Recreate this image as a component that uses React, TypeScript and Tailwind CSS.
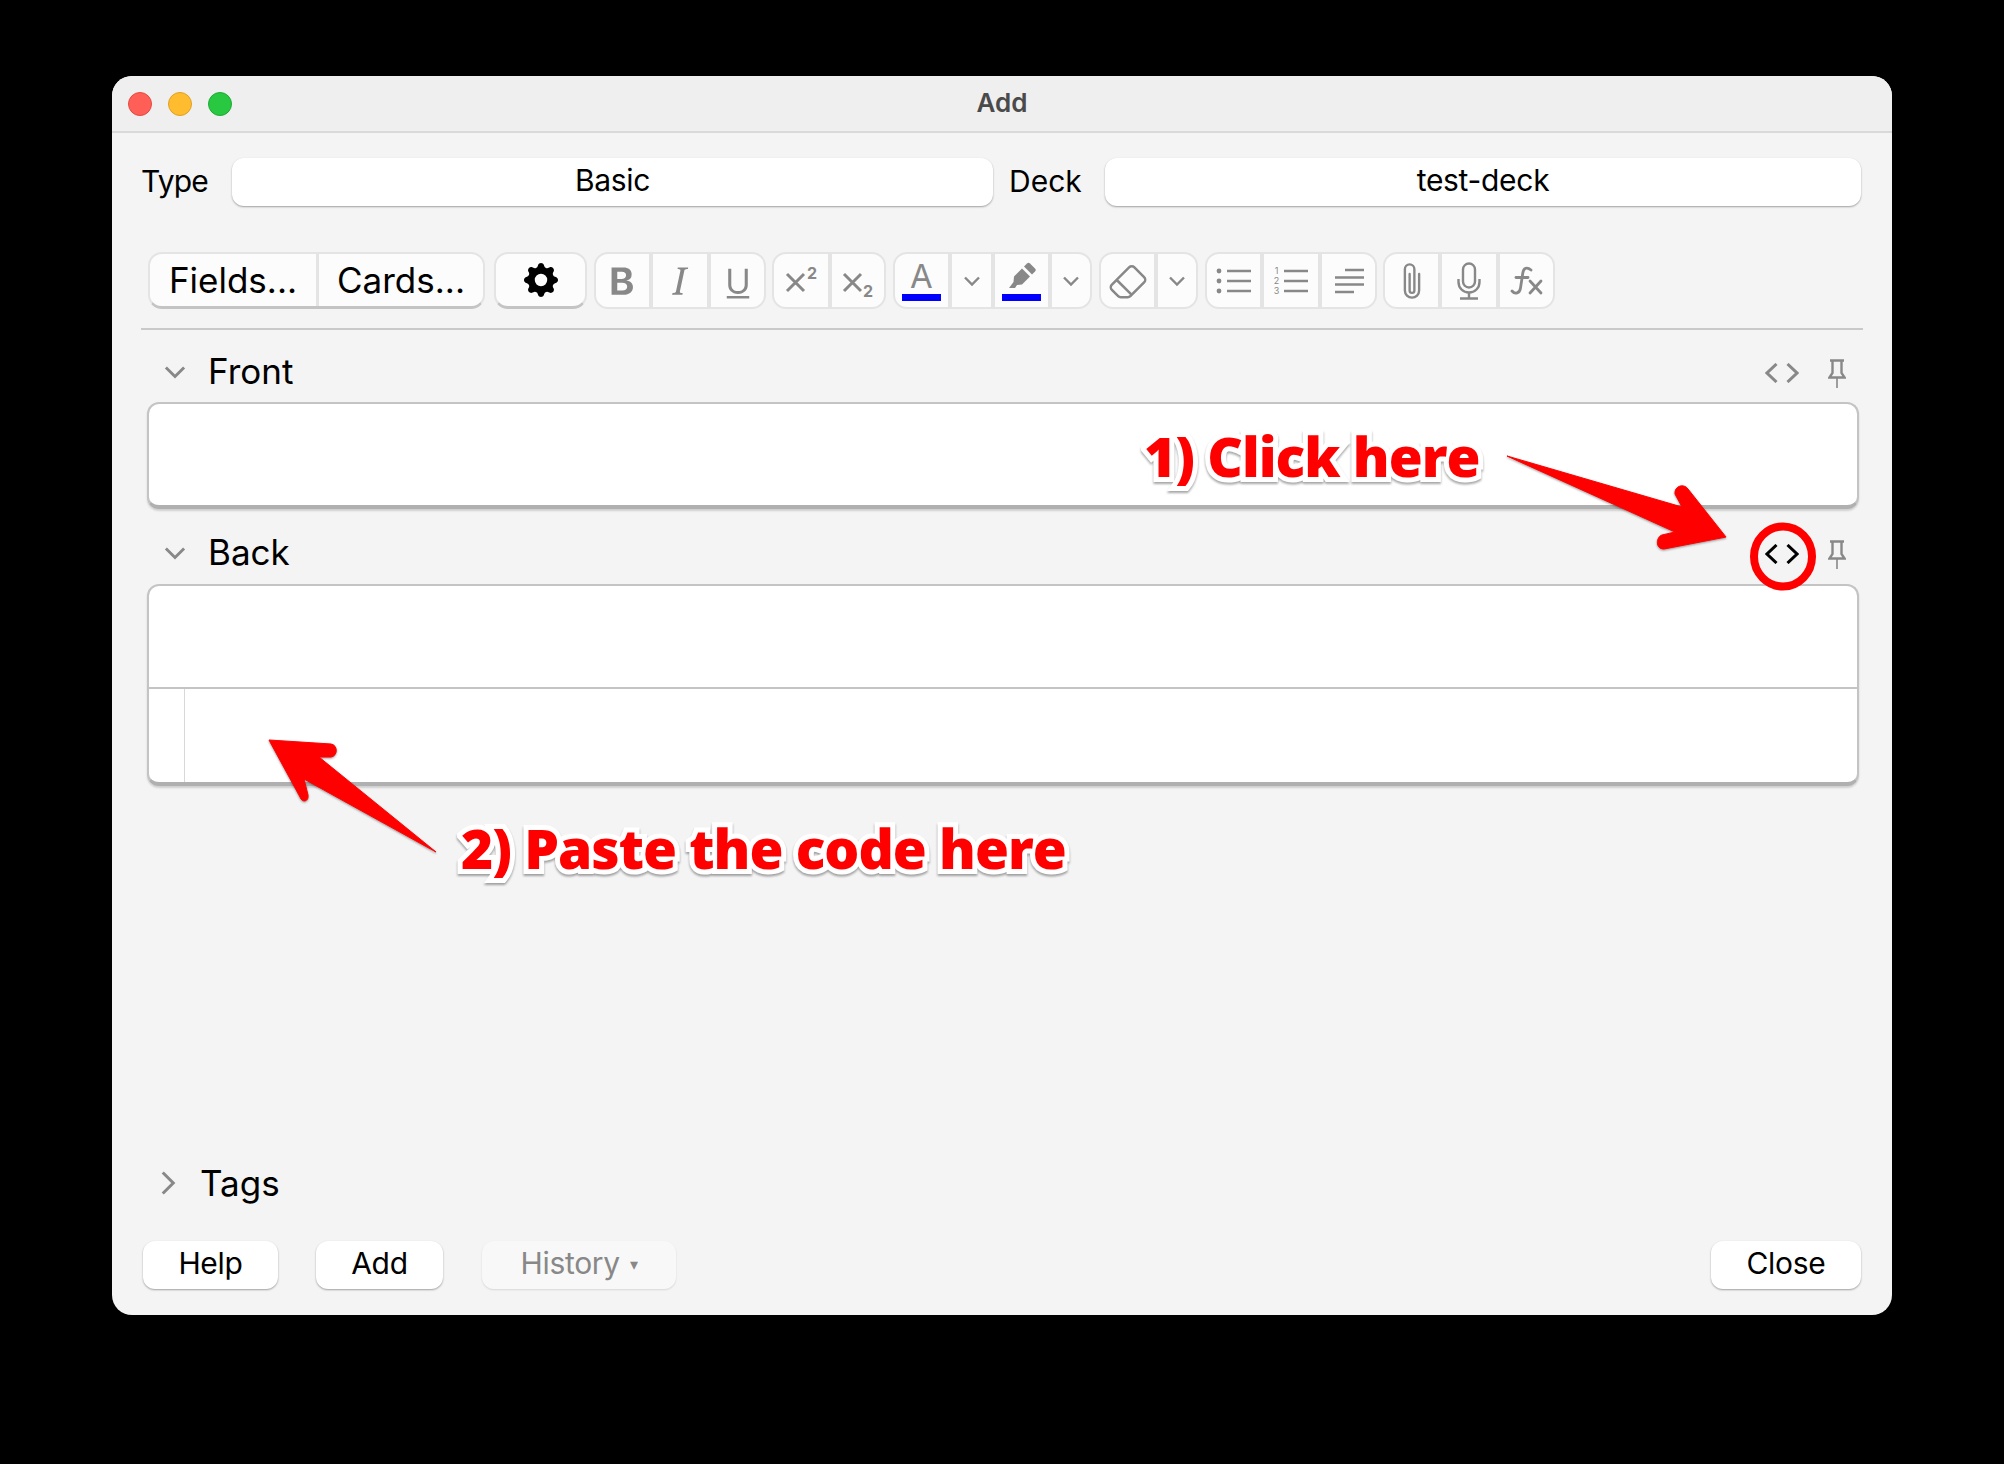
import type { ReactNode } from 'react';
import { BsEraser, BsGearFill, BsPaperclip, BsTypeBold, BsTypeItalic, BsTypeUnderline } from 'react-icons/bs';

const ICON = 'text-[#888888]';

function Chevron({
  down = true,
  size = 20,
  weight = 2.6,
  className = '',
}: {
  down?: boolean;
  size?: number;
  weight?: number;
  className?: string;
}) {
  return (
    <svg width={size} height={size} viewBox="0 0 20 20" fill="none" className={className}>
      <path
        d={down ? 'M3 6.5 L10 13.5 L17 6.5' : 'M6.5 3 L13.5 10 L6.5 17'}
        stroke="#888888"
        strokeWidth={weight}
      />
    </svg>
  );
}

function Group({ className = '', children }: { className?: string; children: ReactNode }) {
  return (
    <div className={`flex h-[57px] gap-[4px] overflow-hidden rounded-[14px] border-2 border-[#e4e4e4] bg-[#e4e4e4] ${className}`}>
      {children}
    </div>
  );
}

function Cell({ w, children }: { w: string; children: ReactNode }) {
  return <div className={`flex items-center justify-center bg-[#fcfcfc] ${w} ${ICON}`}>{children}</div>;
}

function ColorBar({ children }: { children: ReactNode }) {
  return (
    <div className="flex h-full w-full flex-col items-center pt-[4px]">
      <div className="flex h-[36px] items-center justify-center">{children}</div>
      <div className="h-[7px] w-[39px] bg-[#0000ff]" />
    </div>
  );
}

function Script({ sub = false }: { sub?: boolean }) {
  return (
    <svg width="36" height="46" viewBox="0 0 36 46" fill="none">
      <path d="M4 16 L21 33 M21 16 L4 33" stroke="#888888" strokeWidth="3" />
      <text
        x={sub ? 23 : 24}
        y={sub ? 39 : 21}
        fontSize="16"
        fontWeight="700"
        fill="#888888"
        fontFamily="Inter, sans-serif"
      >
        2
      </text>
    </svg>
  );
}

function Highlighter() {
  return (
    <svg width="30" height="30" viewBox="0 0 30 30" fill="#888888">
      <path d="M20 2.5 C21 1.5 22 1.5 23 2.5 L28 7.5 C29 8.5 29 9.5 28 10.5 L25 13.5 L17 5.5 Z" />
      <path d="M15 7.5 L23 15.5 L15 23.5 L10 24 L8 27 L2 27 L6.5 21 L7 15.5 Z" />
    </svg>
  );
}

function BulletList() {
  return (
    <svg width="36" height="30" viewBox="0 0 36 30" fill="none" stroke="#888888" strokeWidth="2.6">
      <circle cx="3" cy="5" r="2.4" fill="#888888" stroke="none" />
      <circle cx="3" cy="15" r="2.4" fill="#888888" stroke="none" />
      <circle cx="3" cy="25" r="2.4" fill="#888888" stroke="none" />
      <path d="M11 5 H35 M11 15 H35 M11 25 H35" />
    </svg>
  );
}

function NumberList() {
  return (
    <svg width="36" height="34" viewBox="0 0 36 34" fill="none">
      <g fontSize="9" fill="#888888" fontFamily="Inter, sans-serif" textAnchor="middle">
        <text x="3.5" y="10">1</text>
        <text x="3.5" y="20">2</text>
        <text x="3.5" y="30">3</text>
      </g>
      <path d="M11 7 H35 M11 17 H35 M11 27 H35" stroke="#888888" strokeWidth="2.6" />
    </svg>
  );
}

function TextLines() {
  return (
    <svg width="30" height="28" viewBox="0 0 30 28" fill="none" stroke="#888888" strokeWidth="2.6">
      <path d="M11 3 H30 M1 10.5 H30 M1 17.5 H30 M1 25 H20" />
    </svg>
  );
}

function Mic() {
  return (
    <svg width="24" height="38" viewBox="0 0 24 38" fill="none" stroke="#888888" strokeWidth="2.4">
      <rect x="6" y="1.5" width="12" height="24" rx="6" />
      <path d="M1.5 17 V20 C1.5 26 6 30.5 12 30.5 C18 30.5 22.5 26 22.5 20 V17" />
      <path d="M12 30.5 V36 M3 36.5 H21" />
    </svg>
  );
}

function FxIcon() {
  return (
    <svg width="33" height="30" viewBox="0 0 33 30" fill="none" stroke="#888888" strokeWidth="2.8" strokeLinecap="round">
      <path d="M21 4 C17 0.5 13.5 2 12.8 7 L10.5 22 C9.8 27.5 5 28.5 2 25" />
      <path d="M6 11.5 L18 11.5" />
      <path d="M20 15 L31 27 M31 15 L20 27" />
    </svg>
  );
}

function CodeIcon({ dark = false }: { dark?: boolean }) {
  return (
    <svg width="34" height="20" viewBox="0 0 34 20" fill="none" stroke={dark ? '#000000' : '#888888'} strokeWidth="3">
      <path d="M11.5 1 L2 10 L11.5 19 M22.5 1 L32 10 L22.5 19" />
    </svg>
  );
}

function PinIcon() {
  return (
    <svg width="18" height="29" viewBox="0 0 18 29" fill="none" stroke="#888888" strokeWidth="2.4">
      <path d="M2 1.5 H16 M4.5 2 V14 L1.5 18.5 H16.5 L13.5 14 V2" />
      <path d="M9 18.5 V29" strokeWidth="1.6" />
    </svg>
  );
}

function WideButton({ w, children, muted = false }: { w: string; children: ReactNode; muted?: boolean }) {
  return (
    <div
      className={`flex h-[48px] items-center justify-center rounded-[12px] pb-[3px] text-[30px] tracking-[-0.3px] ${w} ${
        muted
          ? 'bg-[#f8f8f8] text-[#888888] shadow-[0_1px_2px_rgba(0,0,0,0.12)]'
          : 'bg-white text-black shadow-[0_1px_2px_rgba(0,0,0,0.35)]'
      }`}
    >
      {children}
    </div>
  );
}

function FieldHeader({ label, active = false, topClass }: { label: string; active?: boolean; topClass: string }) {
  return (
    <div className={`flex h-[38px] items-center ${topClass}`}>
      <Chevron size={26} weight={2.2} className="ml-[21px] mt-[2px]" />
      <span className="ml-[20px] text-[35px] leading-none text-black">{label}</span>
      <div className="ml-auto flex translate-y-[2px] items-center">
        <CodeIcon dark={active} />
        <div className="ml-[29px] mr-[17px]"><PinIcon /></div>
      </div>
    </div>
  );
}

export default function App() {
  return (
    <div className="relative min-h-[1464px] overflow-hidden bg-black pl-[112px] pt-[76px] font-['Inter','Liberation_Sans',sans-serif]">
      <div className="flex h-[1239px] w-[1780px] flex-col overflow-hidden rounded-[20px] bg-[#f4f4f4]">
        {/* title bar */}
        <div className="relative flex h-[57px] shrink-0 items-center justify-center border-b-2 border-[#d9d9d9] bg-[#efefef]">
          <div className="absolute left-[16px] top-[16px] flex gap-[16px]">
            <div className="h-[24px] w-[24px] rounded-full border border-[#e5493f] bg-[#ff5f57]" />
            <div className="h-[24px] w-[24px] rounded-full border border-[#dfa123] bg-[#febc2e]" />
            <div className="h-[24px] w-[24px] rounded-full border border-[#1eaa35] bg-[#28c840]" />
          </div>
          <span className="mb-[2px] text-[26px] font-semibold text-[#4a4a4a]">Add</span>
        </div>

        <div className="flex flex-1 flex-col px-[29px] pb-[26px]">
          {/* type and deck */}
          <div className="mt-[25px] flex items-center">
            <span className="mb-[2px] w-[91px] text-[30px] tracking-[-0.8px] text-black">Type</span>
            <WideButton w="w-[761px]">Basic</WideButton>
            <span className="mb-[2px] ml-[16px] w-[96px] text-[30px] text-black">Deck</span>
            <div className="mr-[2px] flex-1">
              <WideButton w="w-full">test-deck</WideButton>
            </div>
          </div>

          {/* editor toolbar */}
          <div className="ml-[7px] mt-[46px] flex">
            <div className="flex h-[57px] gap-[3px] overflow-hidden rounded-[14px] border-2 border-b-[3px] border-[#e4e4e4] border-b-[#c4c4c4] bg-[#e4e4e4] text-[35px] text-black">
              <div className="flex w-[166px] items-center justify-center bg-[#fcfcfc]">Fields...</div>
              <div className="flex w-[164px] items-center justify-center bg-[#fcfcfc]">Cards...</div>
            </div>
            <div className="ml-[9px] mr-[7px] flex h-[57px] w-[93px] items-center justify-center rounded-[14px] border-2 border-b-[3px] border-[#e4e4e4] border-b-[#c4c4c4] bg-[#fcfcfc]">
              <BsGearFill size={34} className="text-black" />
            </div>
            <Group>
              <Cell w="w-[53px]"><BsTypeBold size={44} /></Cell>
              <Cell w="w-[54px]"><BsTypeItalic size={44} /></Cell>
              <Cell w="w-[53px]"><BsTypeUnderline size={40} /></Cell>
            </Group>
            <Group className="ml-[6px]">
              <Cell w="w-[54px]"><Script /></Cell>
              <Cell w="w-[52px]"><Script sub /></Cell>
            </Group>
            <Group className="ml-[7px]">
              <Cell w="w-[53px]"><ColorBar><span className="text-[33px] leading-none text-[#888888]">A</span></ColorBar></Cell>
              <Cell w="w-[39px]"><Chevron size={20} weight={2.4} /></Cell>
              <Cell w="w-[53px]"><ColorBar><Highlighter /></ColorBar></Cell>
              <Cell w="w-[38px]"><Chevron size={20} weight={2.4} /></Cell>
            </Group>
            <Group className="ml-[7px]">
              <Cell w="w-[53px]"><BsEraser size={40} /></Cell>
              <Cell w="w-[38px]"><Chevron size={20} weight={2.4} /></Cell>
            </Group>
            <Group className="ml-[7px]">
              <Cell w="w-[53px]"><BulletList /></Cell>
              <Cell w="w-[54px]"><NumberList /></Cell>
              <Cell w="w-[53px]"><TextLines /></Cell>
            </Group>
            <Group className="ml-[6px]">
              <Cell w="w-[53px]"><BsPaperclip size={38} /></Cell>
              <Cell w="w-[54px]"><Mic /></Cell>
              <Cell w="w-[53px]"><FxIcon /></Cell>
            </Group>
          </div>

          <div className="mt-[19px] h-[2px] bg-[#c9c9c9]" />

          <FieldHeader label="Front" topClass="mt-[22px]" />
          <div className="ml-[6px] mr-[4px] mt-[12px] h-[107px] rounded-[12px] border-2 border-b-[4px] border-[#c4c4c4] border-b-[#b0b0b0] bg-white shadow-[0_2px_2px_rgba(0,0,0,0.15)]" />

          <FieldHeader label="Back" active topClass="mt-[24px]" />
          <div className="ml-[6px] mr-[4px] mt-[13px] flex h-[202px] flex-col overflow-hidden rounded-[12px] border-2 border-b-[4px] border-[#c4c4c4] border-b-[#b0b0b0] bg-white shadow-[0_2px_2px_rgba(0,0,0,0.15)]">
            <div className="h-[103px] shrink-0 border-b-2 border-[#c4c4c4]" />
            <div className="flex-1">
              <div className="ml-[35px] h-full w-[1px] bg-[#d8d8d8]" />
            </div>
          </div>

          {/* tags */}
          <div className="mt-auto flex h-[38px] items-center">
            <Chevron down={false} size={30} weight={2} className="ml-[12px]" />
            <span className="ml-[17px] text-[35px] leading-none text-black">Tags</span>
          </div>

          {/* bottom buttons */}
          <div className="mt-[39px] flex items-center px-[2px]">
            <WideButton w="w-[135px]">Help</WideButton>
            <div className="ml-[38px]"><WideButton w="w-[127px]">Add</WideButton></div>
            <div className="ml-[39px]">
              <WideButton w="w-[194px]" muted>
                History<span className="ml-[10px] text-[16px]">▾</span>
              </WideButton>
            </div>
            <div className="ml-auto"><WideButton w="w-[150px]">Close</WideButton></div>
          </div>
        </div>
      </div>

      {/* annotations painted over the window */}
      <svg className="absolute left-0 top-0" width="2004" height="1464" viewBox="0 0 2004 1464">
        <g fill="#ff0000" stroke="#ff0000" strokeLinejoin="round" className="drop-shadow-[0_1px_1px_rgba(0,0,0,0.4)]">
          <path strokeWidth="1" d="M1507 456 L1682 507 L1675 494 C1674 486 1684 483 1688 489 L1726 537 L1664 549 C1655 549 1656 537 1662 535 L1675 532 Z" />
          <path strokeWidth="1" d="M436 852 L304 779 L308 795 C309 802 302 803 300 797 L269 740 L331 744 C338 745 338 756 331 757 L319 757 Z" />
        </g>
        <ellipse cx="1783" cy="556.5" rx="29" ry="30" fill="none" stroke="#ff0000" strokeWidth="8" />
      </svg>
      <span className="absolute left-[1144px] top-[416px] whitespace-nowrap font-['Open_Sans',sans-serif] text-[55px] font-extrabold leading-[80px] tracking-[-1px] text-[#ff0000] drop-shadow-[0_2px_1px_rgba(0,0,0,0.35)] [-webkit-text-stroke:10px_white] [paint-order:stroke_fill]">
        1) Click here
      </span>
      <span className="absolute left-[461px] top-[808px] whitespace-nowrap font-['Open_Sans',sans-serif] text-[55px] font-extrabold leading-[80px] tracking-[-1px] text-[#ff0000] drop-shadow-[0_2px_1px_rgba(0,0,0,0.35)] [-webkit-text-stroke:10px_white] [paint-order:stroke_fill]">
        2) Paste the code here
      </span>
    </div>
  );
}
